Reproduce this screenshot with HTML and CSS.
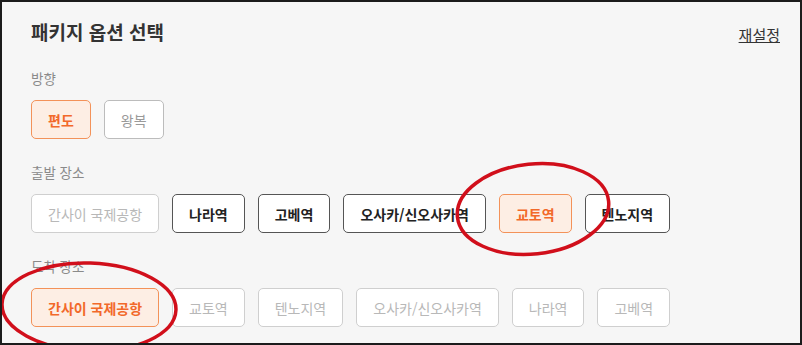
FILE: index.html
```html
<!DOCTYPE html>
<html lang="ko">

<head>
    <meta charset="UTF-8">
    <meta name="viewport" content="width=device-width, initial-scale=1.0">
    <title>패키지 옵션 선택</title>
    <link rel="stylesheet" href="styles.css">
</head>

<body>
    <div class="frame">
        <div class="panel-header">
            <h2 class="panel-title">패키지 옵션 선택</h2>
            <a href="#" class="reset-link">재설정</a>
        </div>

        <!-- 방향 -->
        <div class="option-group">
            <p class="option-label">방향</p>
            <div class="option-list">
                <button class="option selected">편도</button>
                <button class="option muted">왕복</button>
            </div>
        </div>

        <!-- 출발 장소 -->
        <div class="option-group">
            <p class="option-label">출발 장소</p>
            <div class="option-list">
                <button class="option disabled">간사이 국제공항</button>
                <button class="option active">나라역</button>
                <button class="option active">고베역</button>
                <button class="option active">오사카/신오사카역</button>
                <button class="option selected">교토역</button>
                <button class="option active">텐노지역</button>
            </div>
        </div>

        <!-- 도착 장소 -->
        <div class="option-group">
            <p class="option-label">도착 장소</p>
            <div class="option-list">
                <button class="option selected">간사이 국제공항</button>
                <button class="option disabled">교토역</button>
                <button class="option disabled">텐노지역</button>
                <button class="option disabled">오사카/신오사카역</button>
                <button class="option disabled">나라역</button>
                <button class="option disabled">고베역</button>
            </div>
        </div>

        <!-- 빨간 표시 -->
        <svg class="marks" width="802" height="345" viewBox="0 0 802 345">
            <ellipse cx="533" cy="209" rx="76" ry="45" transform="rotate(-6 533 209)" />
            <ellipse cx="89" cy="307" rx="87" ry="44" transform="rotate(2 89 307)" />
        </svg>
    </div>
</body>

</html>
```

FILE: styles.css
```css
body {
    margin: 0;
    padding: 0;
    font-family: "Noto Sans CJK KR", "Noto Sans", sans-serif;
    background-color: #f6f6f6;
}

.frame {
    position: relative;
    width: 802px;
    height: 345px;
    box-sizing: border-box;
    border: 2px solid #1c1c1c;
    background-color: #f6f6f6;
    padding: 17px 20px 0 29px;
    overflow: hidden;
}

.panel-header {
    display: flex;
    justify-content: space-between;
    align-items: center;
    height: 26px;
}

.panel-title {
    margin: 0;
    font-size: 19px;
    line-height: 26px;
    font-weight: bold;
    color: #333333;
}

.reset-link {
    font-size: 15px;
    line-height: 20px;
    color: #333333;
    text-decoration: underline;
    margin-top: 6px;
}

.option-group {
    margin-top: 24px;
}

.option-group + .option-group {
    margin-top: 24px;
}

.option-label {
    margin: 0 0 13px 0;
    font-size: 13.5px;
    line-height: 18px;
    color: #8a8a8a;
}

.option-list {
    display: flex;
    gap: 13px;
}

.option {
    height: 39px;
    padding: 0 16px;
    border: 1px solid #cfcfcf;
    border-radius: 5px;
    background-color: #ffffff;
    font-family: inherit;
    font-size: 14px;
    color: #b8b8b8;
    cursor: pointer;
}

.option.selected {
    border-color: #f39259;
    background-color: #fdeee4;
    color: #f2692a;
    font-weight: bold;
}

.option.active {
    border-color: #555555;
    color: #222222;
    font-weight: bold;
}

.option.muted {
    border-color: #bcbcbc;
    color: #9a9a9a;
}

.marks {
    position: absolute;
    top: -2px;
    left: -2px;
    pointer-events: none;
}

.marks ellipse {
    fill: none;
    stroke: #d10f1b;
    stroke-width: 3.5;
}
```
